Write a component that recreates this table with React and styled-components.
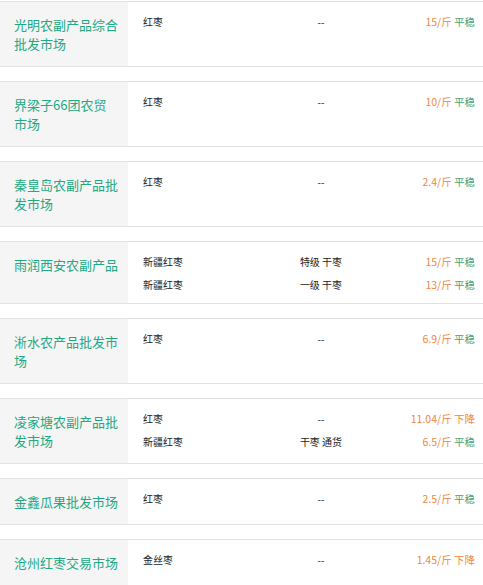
import React from "react";
import styled, { createGlobalStyle } from "styled-components";

const Global = createGlobalStyle`
  html, body { margin: 0; padding: 0; background: #fff; }
  body { font-family: "Noto Sans CJK SC", "Noto Sans", sans-serif; }
`;

const List = styled.div`
  display: flex;
  flex-direction: column;
  gap: 14px;
  padding-top: 1px;
  width: 483px;
`;

const Card = styled.div`
  display: flex;
  border-top: 1px solid #e2e2e2;
  border-bottom: 1px solid #e2e2e2;
  background: #fff;
`;

const Name = styled.div`
  flex: 0 0 128px;
  box-sizing: border-box;
  width: 128px;
  padding: 13px 9.5px 13px 14px;
  background: #f5f5f5;
  color: #22a882;
  font-size: 13px;
  line-height: 19px;
`;

const Rows = styled.div`
  flex: 1;
  display: flex;
  flex-direction: column;
  gap: 1px;
  padding: 8px 8px 8px 15px;
`;

const Row = styled.div`
  display: grid;
  grid-template-columns: 120px 116px 1fr;
  align-items: center;
  height: 22px;
  color: #222;
  font-size: 10px;
`;

const Spec = styled.span`
  text-align: center;
  white-space: nowrap;
`;

const Price = styled.span`
  text-align: right;
  font-size: 10.5px;
  white-space: nowrap;
  color: #ef8741;
`;

const Trend = styled.span`
  color: ${(p) => (p.$down ? "#ef8741" : "#4f9f77")};
`;

const data = [
  { name: "光明农副产品综合批发市场", rows: [["红枣", "--", "15", "平稳"]] },
  { name: "界梁子66团农贸市场", rows: [["红枣", "--", "10", "平稳"]] },
  { name: "秦皇岛农副产品批发市场", rows: [["红枣", "--", "2.4", "平稳"]] },
  {
    name: "雨润西安农副产品",
    rows: [
      ["新疆红枣", "特级 干枣", "15", "平稳"],
      ["新疆红枣", "一级 干枣", "13", "平稳"],
    ],
  },
  { name: "淅水农产品批发市场", rows: [["红枣", "--", "6.9", "平稳"]] },
  {
    name: "凌家塘农副产品批发市场",
    rows: [
      ["红枣", "--", "11.04", "下降"],
      ["新疆红枣", "干枣 通货", "6.5", "平稳"],
    ],
  },
  { name: "金鑫瓜果批发市场", rows: [["红枣", "--", "2.5", "平稳"]] },
  { name: "沧州红枣交易市场", rows: [["金丝枣", "--", "1.45", "下降"]] },
];

export default function App() {
  return (
    <>
      <Global />
      <List>
        {data.map((m, i) => (
          <Card key={i}>
            <Name>{m.name}</Name>
            <Rows>
              {m.rows.map((r, j) => (
                <Row key={j}>
                  <span>{r[0]}</span>
                  <Spec>{r[1]}</Spec>
                  <Price>
                    {r[2]}/斤 <Trend $down={r[3] === "下降"}>{r[3]}</Trend>
                  </Price>
                </Row>
              ))}
            </Rows>
          </Card>
        ))}
      </List>
    </>
  );
}
